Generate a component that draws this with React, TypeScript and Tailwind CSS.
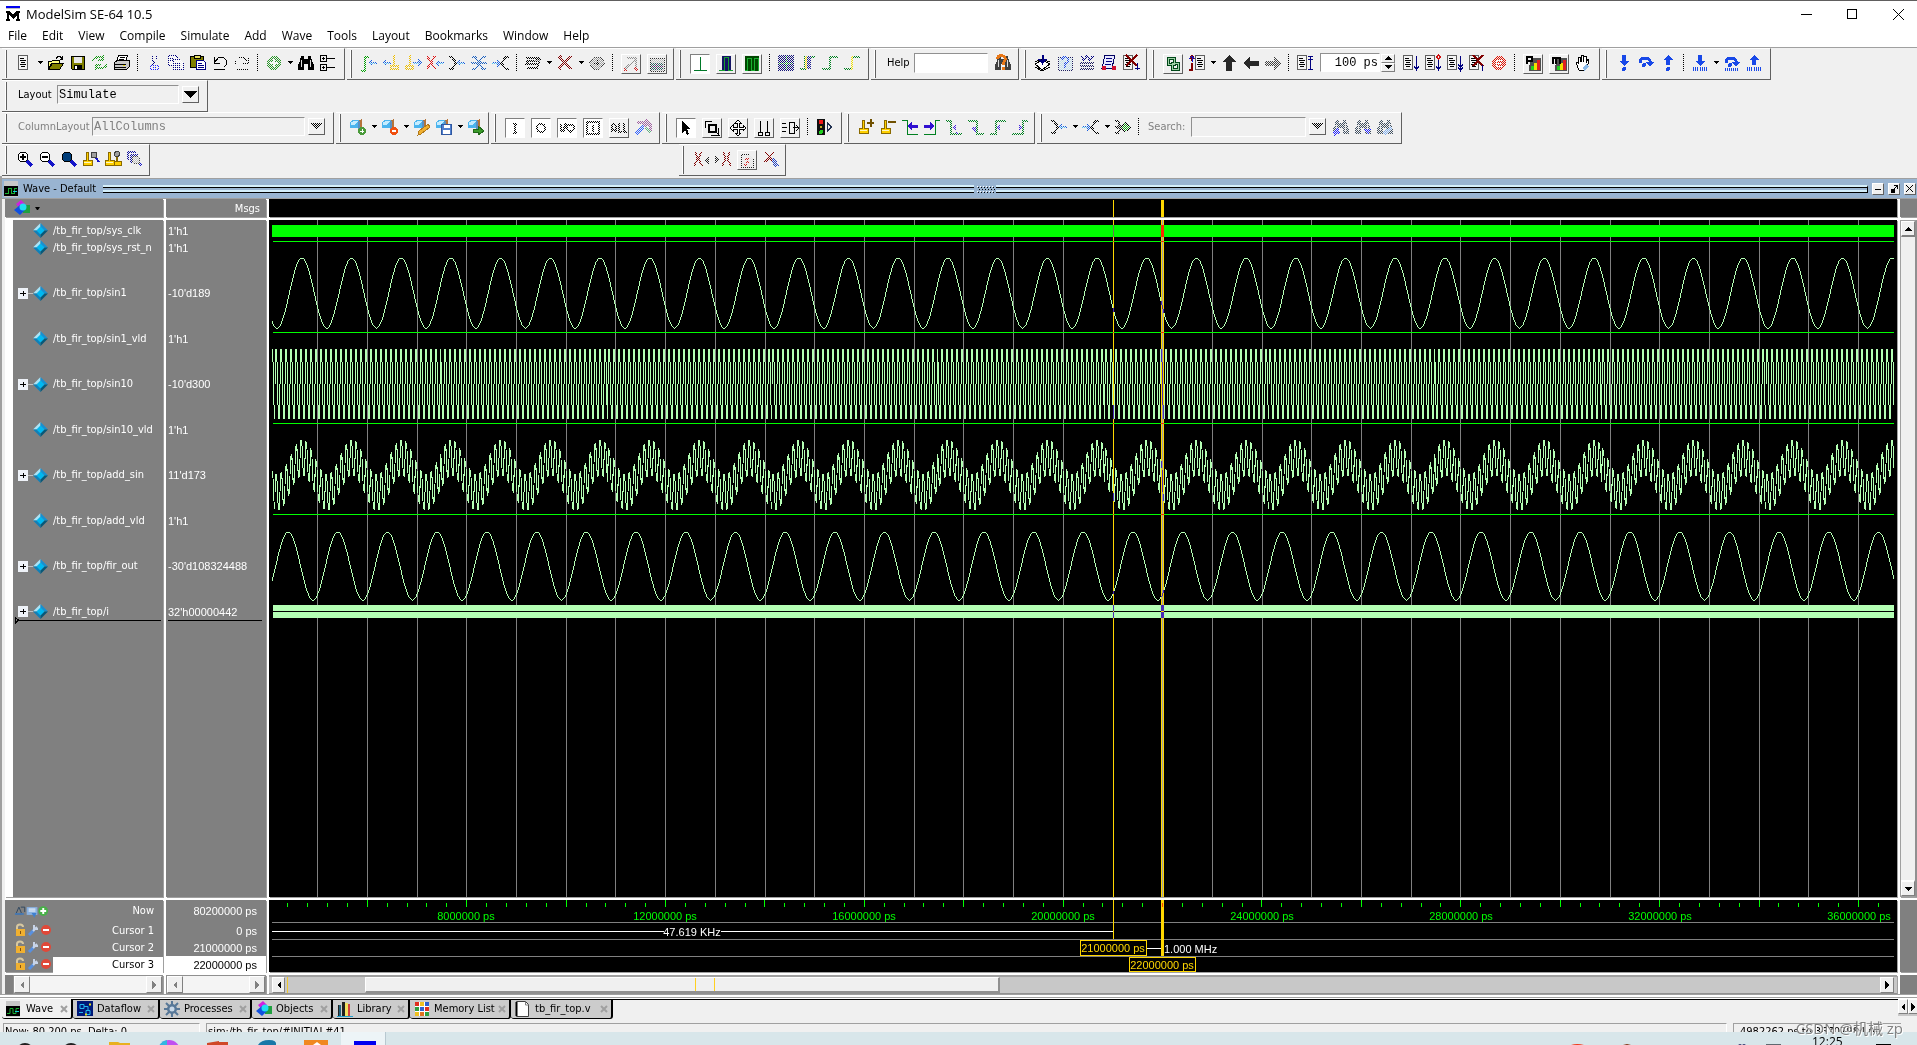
import React from "react";

const s = (d: string, color: string, w = 1) => <path d={d} fill="none" stroke={color} strokeWidth={w} />;
const f = (d: string, color: string, stroke?: string) => <path d={d} fill={color} stroke={stroke} />;

const docLines = (x: number) => (
  <>
    {f(`M${x + 0.5} 1.5h9v14h-9z`, "#f4f4f4", "#606060")}
    {s(`M${x + 2} 4.5h4M${x + 2} 6.5h6M${x + 3} 8.5h4M${x + 2} 10.5h6M${x + 3} 12.5h4`, "#000")}
  </>
);
const folder = (
  <>
    {f("M1 4l3-2h6l-1 8H1z", "#4bb4ee")}
    {f("M2 4l3-1h4l-3 4H2z", "#c4ecff")}
    {f("M10 2l3-1v9l-3 2z", "#b5733a")}
    {f("M9 3h2v8H9z", "#5b8fc0")}
  </>
);
const binoculars = (c: string) => (
  <>
    {f("M4 2h3v3h4V2h3l1 5 2 4v5h-6v-6H7v6H1v-5l2-4z", c)}
    {s("M4.5 6v7M13.5 6v7", "#ddd")}
  </>
);
const leftArrow = (x: number, c = "#1a5fe0") => (
  <>
    {f(`M${x} 9l4-4v3h5v2h-5v3z`, c)}
    {s(`M${x + 2} 9.5h6`, "#4fc3f7")}
  </>
);
const rightArrow = (x: number, c = "#1a5fe0") => (
  <>
    {f(`M${x + 9} 9l-4-4v3h-5v2h5v3z`, c)}
    {s(`M${x} 9.5h6`, "#4fc3f7")}
  </>
);
const magnifier = (c: string) => (
  <>
    {s("M11 11l5 5", "#1414c8", 3)}
    <circle cx="7" cy="7" r="5" fill={c} stroke="#000" />
  </>
);
const cursorPin = (x: number) => (
  <>
    {f(`M${x + 3} 2h2v8h4v5H${x}v-5h3z`, "#ffd000", "#8a6a00")}
    {s(`M${x + 1} 12.5h7`, "#fff8c0")}
  </>
);
const blueDown = f("M7 1h4v6h3l-5 5-5-5h3z", "#1848e8");
const blueUp = f("M9 1l5 5h-3v5H7V6H4z", "#1848e8");
const stepOver = (
  <>
    {s("M3 9q0-5 5-5t6 6", "#1848e8", 3)}
    {f("M9 8h8l-4 5z", "#1848e8")}
    <circle cx="7" cy="11" r="2" fill="#1848e8" />
  </>
);

const ICONS: Record<string, React.ReactNode> = {
  "New": docLines(3),
  "Open": (
    <>
      {f("M1 7h4l1-1h6v3H5l-4 6z", "#ffff80", "#000")}
      {f("M1.5 15.5l4-6h11l-4 6z", "#808000", "#000")}
      {s("M9 4.5q3-4 6 0M15.500 2v3h-3", "#000")}
    </>
  ),
  "Save": (
    <>
      {f("M2.500 2.500h13v13h-12l-1-1z", "#808000", "#000")}
      {f("M5 3h8v6H5z", "#e8e8e8")}
      {f("M5 11h8v4H5z", "#000")}
      {f("M6 12h2v3H6z", "#fff")}
    </>
  ),
  "Refresh": <>{s("M2 7q3-6 10-3M12 1v5H7", "#149614", 2)}{s("M16 10q-3 6-10 4M5 16v-5h5", "#149614", 2)}</>,
  "Print": (
    <>
      {f("M5.500 1.500h9l-2 6h-9z", "#fff", "#000")}
      {s("M7 3.500h5M6 5.500h5", "#000")}
      {f("M1.500 8.500l3-2h12v6l-3 3h-12z", "#c8c8c8", "#000")}
      {s("M2 10.500h11M2 13.500h11", "#000")}
      {f("M10 11h2v1h-2z", "#e8d800")}
    </>
  ),
  "Cut": <>{s("M7 1v5l4 5M11 1v5l-4 5", "#000080")}{s("M5.500 11.500h3v4h-3zM10.500 11.500h3v4h-3z", "#2222ff")}</>,
  "Copy": (
    <>
      {f("M1.500 1.500h7l2 2v8h-9z", "#fff", "#000080")}
      {f("M6.500 5.500h7l3 3v7h-10z", "#fff", "#000080")}
      {s("M3 4.500h4M3 6.500h3M8 9.500h5M8 11.500h6M8 13.500h6", "#000080")}
    </>
  ),
  "Paste": (
    <>
      {f("M1.500 2.500h13v11h-13z", "#808000", "#000")}
      {f("M5 1h6v3H5z", "#e8e060", "#000")}
      {f("M7.500 6.500h7l2 2v7h-9z", "#fff", "#000080")}
      {s("M9 9.500h4M9 11.500h6M9 13.500h6", "#000080")}
    </>
  ),
  "Undo": <>{s("M3 3v6h6M3.500 8.500l4-5h5l3 3v4l-3 3", "#000")}{s("M3 15.500h11", "#000")}</>,
  "Redo": <>{s("M15 3v6H9M14.500 8.500l-4-5h-5l-3 3v4l3 3", "#000")}{s("M4 15.500h11", "#000")}</>,
  "Add item": <><circle cx="9" cy="9" r="7" fill="#2a962a" />{s("M9 5v8M5 9h8", "#fff", 2)}</>,
  "Find": binoculars("#000"),
  "Expand tree": (
    <>
      {s("M1.500 1.500h6v6h-6zM1.500 10.500h6v6h-6zM3 4.500h3M4.500 3v3M3 13.500h3M4.500 12v3", "#000")}
      {s("M8 4.500h8M8 13.500h8", "#000")}
    </>
  ),
  "Insert cursor": <>{s("M1 16.500h4v-14h4", "#00a000", 2)}{leftArrow(8)}</>,
  "Previous cursor": <>{leftArrow(0)}{s("M12 1v11M9 12h7v3H9z", "#f0c000", 2)}</>,
  "Next cursor": <>{s("M6 1v11M2 12h7v3H2z", "#f0c000", 2)}{rightArrow(9)}</>,
  "Delete cursor": <>{s("M1 2l8 13M9 2L1 15", "#e01010", 2)}{leftArrow(9)}</>,
  "Expand time": <>{s("M1 3h3l4 6-4 6H1", "#000", 2)}{leftArrow(8)}</>,
  "Expand all time": <>{s("M2 3h3l4 5 4-5h3M2 15h3l4-5 4 5h3M1 9h16", "#1a5fc0", 2)}</>,
  "Collapse time": <>{rightArrow(0)}{s("M17 3h-3L9 9l5 6h3", "#000", 2)}</>,
  "Stack": <>{s("M2 4h12l-2 3H4l-2 3h12M3 14h10l3-10", "#000", 2)}{s("M8 9l3-3h5", "#808080")}</>,
  "Remove": s("M3 2l12 13M15 2L3 15", "#800000", 3),
  "Hex": <>{f("M1 9l5-6h6l5 6-5 6H6z", "#a0a0a0", "#404040")}{s("M9 5v7M6 9h6", "#000")}</>,
  "Edit mode": <>{s("M2 15l12-11M5 3h9v9", "#909090", 2)}{s("M2 14l3 2M13 13l3 3", "#d02020", 2)}</>,
  "Calc": <>{f("M2 3h14v13H2z", "#c0c0c0", "#303030")}{f("M3 8h12v7H3z", "#306060")}{s("M3 11.500h12M8.500 8v7", "#702070")}</>,
  "Event": s("M9.500 2v14M3 15.500h13", "#007828"),
  "Cycle": <>{f("M5 1h9v15H5z", "#141464")}{s("M2 15.500h5v-13h4v13h5", "#18a030")}</>,
  "Delta": <>{f("M2 1h14v15H2z", "#004800")}{s("M2 15.500h2v-12h4v12h3v-12h4v12h1", "#18b030")}</>,
  "Zoom pattern": <>{f("M1 1h16v16H1z", "#141478")}{s("M2 9h14M9.500 2v14", "#18a030")}</>,
  "Edge 1": <>{s("M1 15h5V3h10", "#008020", 2)}{f("M8 2h4v13H8z", "#202090")}{s("M7 2v13", "#f0e000", 2)}</>,
  "Edge 2": s("M1 15h8V3h8", "#008020", 2),
  "Edge 3": <>{s("M1 15h7M10 3h7", "#008020", 2)}{s("M9 2v14", "#f0e000", 2)}</>,
  "Help search": <>{binoculars("#404040")}{s("M3 5q2-5 6-3t1 6l-1 3", "#e87818", 3)}{f("M8 13h3v3H8z", "#e87818")}</>,
  "Compile": <>{f("M1 10l7-4 8 4-8 6z", "#fff", "#000")}{s("M1 8l7-3 8 3M1 13l7 4 8-4", "#000")}{s("M8.500 1v7M5 5l3.500 4L12 5", "#000080", 2)}</>,
  "Compile selected": <>{f("M2 3h14v13H2z", "#c4e0ee", "#202060")}{s("M6 6q0-3 3-3t3 3-3 4v4", "#1848e8", 2)}</>,
  "Compile all": <>{s("M2 8.500h14M2 11.500h14M2 14.500h14", "#202060", 2)}{s("M3 2l3 4 3-4 3 4 3-4", "#000080", 2)}</>,
  "Simulate run": <>{f("M5 1h10l-3 13H2z", "#e8e8ff", "#000060")}{s("M6 4h6M6 7h6M5 10h6", "#000080")}<circle cx="4" cy="14" r="2.500" fill="#d01030" /><circle cx="14" cy="14" r="2.500" fill="#d01030" /></>,
  "Break run": <>{docLines(1)}{s("M4 1l11 11M15 1L4 12", "#800000", 2)}{s("M15.500 9v7M13 14h5", "#000080")}</>,
  "Restart links": (
    <>
      {s("M4.500 3.500h6v6h-6zM8.500 8.500h6v6h-6z", "#004818", 3)}
      {s("M4.500 3.500h6v6h-6zM8.500 8.500h6v6h-6z", "#a0d0a8")}
    </>
  ),
  "Source": <>{s("M1 16h3V9M4 7V2M2 5l2-3 2 3", "#800000", 2)}{s("M4 2v6M1 5l3-3 3 3", "#1414c8")}{docLines(7)}</>,
  "Up": f("M9 1l7 7h-4v9H6V8H2z", "#282828"),
  "Back": f("M1 9l7-6v4h9v5H8v4z", "#282828"),
  "Forward": f("M17 9l-7-6v4H1v5h9v4z", "#404040"),
  "Restart": <>{docLines(1)}{s("M14.500 2v14M12 5h5M12 2.500h5M12 15.500h5", "#000080", 1)}</>,
  "Run": <>{docLines(1)}{s("M14.500 2v14M12 12l2.500 4 2.500-4", "#000080")}</>,
  "Continue run": <>{docLines(1)}{s("M14.500 6v10M12 12l2.500 4 2.500-4", "#000080")}{s("M14.500 1l2 2-2 2-2-2z", "#d01010")}</>,
  "Run all": <>{docLines(1)}{s("M14.500 2v14", "#000080")}{s("M12 10l2.500 4 2.500-4M12 13l2.500 4 2.500-4", "#000080")}</>,
  "Break": <>{docLines(1)}{s("M5 1l10 11M15 1L5 12", "#800000", 2)}{s("M14.500 11v6", "#000080")}</>,
  "Stop": <><circle cx="9" cy="9" r="7" fill="#e01000" />{s("M13 6H6v6h7M6 9h6", "#fff", 1)}</>,
  "Profile": <>{f("M8 3h9v13H5v-4z", "#505050")}{f("M7 11h3v4H7z", "#20d020")}{f("M10 8h3v7h-3z", "#f0e000")}{f("M13 5h3v10h-3z", "#e02020")}{s("M2.500 9V2h5v4h-5", "#000", 2)}</>,
  "Memory profile": <>{f("M8 3h9v13H5v-4z", "#505050")}{f("M7 11h3v4H7z", "#20d020")}{f("M10 8h3v7h-3z", "#f0e000")}{f("M13 5h3v10h-3z", "#e02020")}{s("M2.500 9V3h7v6M6 3v6", "#000", 2)}</>,
  "Hand": <>{f("M5 16L2 9l2-1 1 2-1-7h2l1 5V1h2v7l1-6h2v7l2-4 1 1-2 8-2 2z", "#fff", "#000")}{f("M9 13l4-3 2 3-5 4z", "#88b8e8")}</>,
  "Step into": <>{blueDown}<circle cx="9" cy="15" r="2" fill="#1848e8" /></>,
  "Step over": stepOver,
  "Step out": <>{blueUp}<circle cx="9" cy="15" r="2" fill="#1848e8" /></>,
  "Step into current": <>{blueDown}{s("M2.500 13v4M4.500 13v4M6.500 13v4M9 13v4M11.500 13v4M13.500 13v4M15.500 13v4", "#1848e8")}</>,
  "Step over current": <>{stepOver}{s("M2.500 14v3M4.500 14v3M6.500 14v3M8.500 14v3M10.500 14v3M12.500 14v3M14.500 14v3", "#1848e8")}</>,
  "Step out current": <>{blueUp}{s("M2.500 13v4M4.500 13v4M6.500 13v4M9 13v4M11.500 13v4M13.500 13v4M15.500 13v4", "#1848e8")}</>,
  "Add folder": <>{folder}<circle cx="13" cy="13" r="4" fill="#4a9a3a" />{s("M13 11v4M11 13h4", "#fff")}</>,
  "Delete folder": <>{folder}<circle cx="13" cy="13" r="4" fill="#f05010" />{s("M11 13h4", "#fff", 2)}</>,
  "Edit folder": <>{folder}{f("M5 17l1-4 9-7 2 3-9 7z", "#f0b030", "#b07818")}</>,
  "Save folder": <>{folder}{f("M6.500 6.500h10v10h-10z", "#5080d0", "#3058a0")}{f("M9 7h6v3H9zM8 12h7v4H8z", "#fff")}</>,
  "Load folder": <>{folder}{f("M6 11h5V8l6 5-6 4v-3H6z", "#3a9a2a", "#206818")}</>,
  "Inputs": s("M7 4.500h4M9 4v9M7 13.500h4", "#000", 2),
  "Outputs": <circle cx="9" cy="9" r="4" fill="none" stroke="#000" strokeWidth="2" />,
  "Inouts": <>{s("M2.500 5v8M8 4L5 13", "#000", 2)}<circle cx="12.500" cy="9" r="3.500" fill="none" stroke="#000" strokeWidth="2" /></>,
  "Internals": <>{s("M3 3h12v12H3zM8 6.500h1v6", "#000", 2)}</>,
  "All signals": s("M1.500 13V7l2-2 2 2v6M1 10.500h4M8.500 4v8.500h3M13.500 4v8.500h3", "#000", 2),
  "Filter tools": <>{s("M2 16L10 7", "#3060ff", 4)}{s("M3 4h5l5 4M11 2l5 5v6", "#a060a0", 3)}{s("M12 9l4 6", "#60b080", 3)}</>,
  "Select": f("M5 2v12l3-3 2 5 2-1-2-5h4z", "#000"),
  "Zoom box": <>{s("M2 9V2h7M8 16h7V9", "#000")}{s("M6 6h7v7H6z", "#000", 2)}{s("M13 13l4 4", "#000", 1)}</>,
  "Pan": f("M9 1l3 3h-2v4h4V6l3 3-3 3v-2h-4v4h2l-3 3-3-3h2v-4H4v2L1 9l3-3v2h4V4H6z", "#fff", "#000"),
  "Two cursors": s("M5.500 2v11M12.500 2v11M3.500 13.500h4v3h-4zM10.500 13.500h4v3h-4z", "#000"),
  "Edit wave": <>{s("M1 4.500h4M1 8.500h5M1 12.500h4M8.500 3v12M8.500 3.500h5v11h-5M12 8.500h5M15 6l3 3-3 3", "#000")}</>,
  "Stop drawing": <>{f("M2 1h8v16H2z", "#101010")}<circle cx="6" cy="4" r="2.500" fill="#f01818" /><circle cx="6" cy="9" r="1.500" fill="#c8b020" /><circle cx="6" cy="14" r="2" fill="#20d020" />{s("M12.500 5l4 4-4 4z", "#203050")}</>,
  "Add cursor": <>{cursorPin(2)}{s("M10 5h7M13.500 1v8", "#705000", 2)}</>,
  "Delete cursor pin": <>{cursorPin(2)}{s("M9 4h8", "#705000", 2)}</>,
  "Previous transition": <>{s("M1 2.500h5v14h11", "#008020")}{f("M6 8l5-4v3h6v3h-6v3z", "#3010d0")}</>,
  "Next transition": <>{s("M1 16.500h11v-14h5", "#008020")}{f("M11 8L7 4v3H1v3h6v3z", "#3010d0")}</>,
  "Previous falling": <>{s("M1 3h5v13h11", "#008020", 2)}{f("M7 9l4-3v7zM11 14l4 2h-4z", "#4020e0")}</>,
  "Next falling": <>{s("M1 3h9v13h7", "#008020", 2)}{f("M4 11l5-3v6z", "#4020e0")}</>,
  "Previous rising": <>{s("M1 16h6V3h10", "#008020", 2)}{f("M7 10l4-4v8z", "#4020e0")}</>,
  "Next rising": <>{s("M1 16h11V3h5", "#008020", 2)}{f("M12 9L8 6v7z", "#4020e0")}</>,
  "Expand both": <>{s("M1 3h3l3 6-3 6H1M1 9h2", "#000", 2)}{f("M3 7h6v4H3z", "#202020")}{f("M11 4l6 5-6 5-4-5z", "#18a018", "#000")}</>,
  "Search down": <>{binoculars("#405060")}{f("M1 13l5-3 2 5-6 3z", "#2020ff")}</>,
  "Search up": <>{binoculars("#405060")}{f("M10 11h7l-3 6z", "#2020ff")}</>,
  "Search options": <>{binoculars("#405060")}{f("M7 14l8-6 2 3-8 6z", "#80b0f0")}</>,
  "Zoom in": <>{magnifier("#fff")}{s("M7 4v6M4 7h6", "#000", 2)}</>,
  "Zoom out": <>{magnifier("#fff")}{s("M4 7h6", "#000", 2)}</>,
  "Zoom full": magnifier("#003c78"),
  "Zoom cursor": <>{cursorPin(1)}<circle cx="12" cy="5" r="3" fill="#a0a0a0" stroke="#404040" />{s("M14 8l3 4", "#1414c8", 2)}</>,
  "Zoom between": <>{cursorPin(1)}{f("M12 5h1v6h4v4h-7v-4h2z", "#ffd000", "#8a6a00")}<circle cx="13" cy="4" r="2.500" fill="#a0a0a0" stroke="#404040" /></>,
  "Zoom range": <>{s("M1 2h9M2 1v9M4 5h8M5 4v9", "#1010a0", 2)}{s("M12 12l4 4", "#1414c8", 2)}<circle cx="10" cy="10" r="4" fill="#c0c0c0" stroke="#404040" /></>,
  "Previous difference": <>{s("M3 2l2 5v3l-3 6M9 2L7 7v3l3 6", "#800000", 2)}{f("M17 5v9l-5-4z", "#202020")}</>,
  "Next difference": <>{f("M1 5v9l5-4z", "#202020")}{s("M9 2l2 5v3l-3 6M16 2l-2 5v3l3 6", "#800000", 2)}</>,
  "Annotate": <>{f("M3 3h8l4 4v9H3z", "#e8e8e8", "#202020")}{s("M7 8h4M8 11h3M6 14h3", "#d02020", 2)}</>,
  "Clear differences": <>{s("M3 2l9 10M12 2L3 12", "#800000", 2)}{f("M9 9l4-1 4 8-5 1z", "#2040c0")}</>,
};

type Item =
  | { t: "i" | "d" | "b" | "p" | "bd" | "pd"; n: string }
  | { t: "caret" | "sep"; n?: string };

const I = (n: string): Item => ({ t: "i", n });
const D = (n: string): Item => ({ t: "d", n });
const B = (n: string): Item => ({ t: "b", n });
const BD = (n: string): Item => ({ t: "bd", n });
const P = (n: string): Item => ({ t: "p", n });
const PD = (n: string): Item => ({ t: "pd", n });
const C: Item = { t: "caret" };
const S: Item = { t: "sep" };

const DITHER =
  "[mask-image:conic-gradient(#000_25%,transparent_0_50%,#000_0_75%,transparent_0)] [mask-size:2px_2px]";

function Glyph({ name, dim }: { name: string; dim?: boolean }) {
  return (
    <svg width="18" height="18" viewBox="0 0 18 18" shapeRendering="crispEdges" aria-hidden="true" className={dim ? DITHER : ""}>
      {ICONS[name]}
    </svg>
  );
}

function Tools({ items }: { items: Item[] }) {
  return (
    <>
      {items.map((it, i) => {
        if (it.t === "caret")
          return (
            <button key={i} aria-label="More" className="flex w-[10px] shrink-0 items-center justify-center">
              <svg width="5" height="3" shapeRendering="crispEdges"><path d="M0 0h5L3 3H2z" fill="#000" /></svg>
            </button>
          );
        if (it.t === "sep")
          return <span key={i} className="mx-1 h-[18px] w-[2px] shrink-0 bg-[repeating-linear-gradient(#000_0_1px,transparent_1px_2px)] bg-[length:1px_2px] [background-repeat:repeat-y]" />;
        if (it.t === "i" || it.t === "d")
          return (
            <button key={i} aria-label={it.n} className="flex h-5 w-[22px] shrink-0 items-center justify-center">
              <Glyph name={it.n} dim={it.t === "d"} />
            </button>
          );
        const pressed = it.t === "p" || it.t === "pd";
        return (
          <button
            key={i}
            aria-label={it.n}
            className={
              "mx-[3px] mt-[2px] flex size-5 shrink-0 items-center justify-center border " +
              (pressed ? "border-t-[#808080] border-l-[#808080] border-r-white border-b-white bg-white" : "border-t-white border-l-white border-r-[#606060] border-b-[#606060]")
            }
          >
            <Glyph name={it.n} dim={it.t === "bd" || it.t === "pd"} />
          </button>
        );
      })}
    </>
  );
}

function Bar({ className, children }: { className: string; children: React.ReactNode }) {
  return (
    <div className={"mr-[2px] flex h-8 shrink-0 items-center border-t border-r border-b border-t-white border-r-[#606060] border-b-[#606060] pb-[3px] " + className}>
      <span className="mt-[2px] mr-[6px] ml-[3px] h-7 w-[2px] shrink-0 border-r border-l border-r-[#606060] border-l-white" />
      {children}
    </div>
  );
}

function DropArrow({ dim }: { dim?: boolean }) {
  return (
    <span className="pointer-events-none ml-[3px] flex h-[17px] w-[17px] shrink-0 items-center justify-center border border-t-white border-r-[#606060] border-b-[#606060] border-l-white">
      <svg width="13" height="7" shapeRendering="crispEdges" className={dim ? DITHER : ""}><path d="M0 0h13L7 7H6z" fill="#000" /></svg>
    </span>
  );
}

const SUNK = "border border-t-[#909090] border-l-[#909090] border-r-white border-b-white";

const MENUS = ["File", "Edit", "View", "Compile", "Simulate", "Add", "Wave", "Tools", "Layout", "Bookmarks", "Window", "Help"];

const SIGNALS: { name: string; value: string; tall?: boolean; plus?: boolean }[] = [
  { name: "/tb_fir_top/sys_clk", value: "1'h1" },
  { name: "/tb_fir_top/sys_rst_n", value: "1'h1" },
  { name: "/tb_fir_top/sin1", value: "-10'd189", tall: true, plus: true },
  { name: "/tb_fir_top/sin1_vld", value: "1'h1" },
  { name: "/tb_fir_top/sin10", value: "-10'd300", tall: true, plus: true },
  { name: "/tb_fir_top/sin10_vld", value: "1'h1" },
  { name: "/tb_fir_top/add_sin", value: "11'd173", tall: true, plus: true },
  { name: "/tb_fir_top/add_vld", value: "1'h1" },
  { name: "/tb_fir_top/fir_out", value: "-30'd108324488", tall: true, plus: true },
  { name: "/tb_fir_top/i", value: "32'h00000442", plus: true },
];

const X0 = 3;
const X1 = 1625;
const PERIOD = 49.7;

function sinePath(minX: number, cy: number, amp: number) {
  const y = (x: number) => Math.round(cy + amp * Math.cos((2 * Math.PI * (x - minX)) / PERIOD));
  let d = "";
  for (let x = X0; x < X1; x++) {
    const a = y(x);
    const b = y(x + 1);
    const top = Math.min(a, b);
    const bottom = Math.max(a, b, top + 1);
    d += `M${x} ${top}h1V${bottom}h-1z`;
  }
  return d;
}

const STEPS = [[-1, 0], [-1, -0.63], [-0.63, 0.6], [0.6, 1], [0, 1]];

function fastPath(base: (x: number) => number, amp: number) {
  let d = "";
  for (let x = X0; x < X1; x++) {
    const ph = (x - 6) / (PERIOD / 10);
    const k = Math.floor((ph - Math.floor(ph)) * 5 + 0.001) % 5;
    const c = base(x);
    d += `M${x} ${Math.round(c + STEPS[k][0] * amp)}h1V${Math.round(c + STEPS[k][1] * amp)}h-1z`;
  }
  return d;
}

const SIN1 = sinePath(8, 73, 35);
const SIN10 = fastPath(() => 164, 35);
const ADD = fastPath((x) => 255 + 17.5 * Math.cos((2 * Math.PI * (x - 8)) / PERIOD), 18);
const FIR = sinePath(44, 346, 34);
const GRID = Array.from({ length: 32 }, (_, i) => ({ x: Math.floor(48.75 + i * 49.705), color: i === 17 ? "#5f37a8" : "#808080" })).filter((_, i) => i !== 16);
const TICKS = Array.from({ length: 81 }, (_, k) => ({ x: Math.floor(98.3 + (k - 4) * 19.882), big: (k - 4) % 5 === 0 }));
const TIMES = [8, 12, 16, 20, 24, 28, 32, 36];

function WaveBody() {
  return (
    <svg className="block h-full w-full bg-black" shapeRendering="crispEdges" role="img" aria-label="Waveforms">
      {GRID.map(({ x, color }) => <rect key={x} x={x} y="0" width="1" height="100%" fill={color} />)}
      <rect x={X0} y="5" width={X1 - X0} height="12" fill="#00ff00" />
      {[21, 112, 203, 294].map((y) => <rect key={y} x={X0 + 1} y={y} width={X1 - X0 - 1} height="1" fill="#00ff00" />)}
      <path d={SIN1} fill="#b4ffb4" />
      <path d={SIN10} fill="#b4ffb4" />
      <path d={ADD} fill="#b4ffb4" />
      <path d={FIR} fill="#b4ffb4" />
      <rect x={X0 + 1} y="385" width={X1 - X0 - 1} height="6" fill="#b4ffb4" />
      <rect x={X0 + 1} y="391" width={X1 - X0 - 1} height="1" fill="#000" />
      <rect x={X0 + 1} y="392" width={X1 - X0 - 1} height="6" fill="#b4ffb4" />
      <rect x="844" y="0" width="1" height="100%" fill="#ffd700" className="mix-blend-difference" />
      <rect x="844" y="5" width="1" height="12" fill="#6c7a50" />
      <rect x="892" y="0" width="3" height="100%" fill="#ffd700" className="mix-blend-difference" />
    </svg>
  );
}

function Timeline() {
  return (
    <svg className="block h-full w-full bg-black font-['Liberation_Sans',sans-serif] text-[11px]" shapeRendering="crispEdges">
      {TICKS.map(({ x, big }) => <rect key={x} x={x} y={big ? 0 : 3} width="1" height={big ? 7 : 4} fill="#00ff00" />)}
      {TIMES.map((t, i) => (
        <text key={t} x={197 + i * 199} y="20" textAnchor="middle" fill="#00ff00">{t}000000 ps</text>
      ))}
      {[22, 39, 56].map((y) => <rect key={y} x={X0} y={y} width={X1 - X0} height="1" fill="#808080" />)}
      <rect x={X0} y="31" width={844 - X0} height="1" fill="#fff" />
      <rect x="395" y="25" width="57" height="13" fill="#000" />
      <text x="423" y="36" textAnchor="middle" fill="#fff">47.619 KHz</text>
      <rect x="844" y="0" width="1" height="39" fill="#ffd700" />
      <rect x="892" y="0" width="3" height="56" fill="#ffd700" />
      <rect x="893" y="3" width="1" height="4" fill="#ff4000" />
      <rect x="811.5" y="40.5" width="66" height="15" fill="#000" stroke="#ffd700" />
      <text x="844" y="52" textAnchor="middle" fill="#ffd700">21000000 ps</text>
      <rect x="878" y="48" width="14" height="1" fill="#fff" />
      <text x="895" y="53" fill="#fff">1.000 MHz</text>
      <rect x="860.5" y="57.5" width="66" height="14" fill="#000" stroke="#ffd700" />
      <text x="893" y="69" textAnchor="middle" fill="#ffd700">22000000 ps</text>
    </svg>
  );
}

function Diamond() {
  return (
    <svg width="15" height="15" viewBox="0 0 15 15" aria-hidden="true">
      <path d="M7.5 0L0 7.500h4l3.500-3.500z" fill="#a8e4f8" />
      <path d="M7.5 0L15 7.500h-4L7.500 4z" fill="#1890d0" />
      <path d="M0 7.500L7.500 15v-4L4 7.500z" fill="#1080b8" />
      <path d="M15 7.500L7.500 15v-4L11 7.500z" fill="#085878" />
      <path d="M7.500 3.500l4 4-4 4-4-4z" fill="#00b8f0" />
    </svg>
  );
}

function CursorIcons({ first }: { first?: boolean }) {
  return (
    <svg width="40" height="15" viewBox="0 0 40 15" aria-hidden="true">
      {first ? (
        <>
          <path d="M2 10l3-7 3 7zM7 3h4v5" fill="none" stroke="#304860" />
          <rect x="1" y="9" width="9" height="2" fill="#4878b0" />
          <rect x="13" y="3" width="11" height="8" fill="#88b0e0" />
          <path d="M15 5h7M15 7h7" stroke="#fff" />
          <path d="M18 9h5l-2 5z" fill="#4080d0" />
          <circle cx="30" cy="7" r="5" fill="#48b048" />
          <path d="M30 4v6M27 7h6" stroke="#fff" strokeWidth="2" />
        </>
      ) : (
        <>
          <path d="M5 7V4q0-2.500 3-2.500t3 2.500" fill="none" stroke="#d8c8a0" strokeWidth="2" />
          <rect x="4" y="6" width="9" height="7" fill="#f0b030" />
          <rect x="8" y="8" width="1" height="3" fill="#805010" />
          <path d="M17 12l5-5" stroke="#5890e0" strokeWidth="3" />
          <path d="M21 8l4-4M22 2v4h4" stroke="#c8d4e8" strokeWidth="2" fill="none" />
          <circle cx="34" cy="7" r="5" fill="#e04838" />
          <rect x="31" y="6" width="6" height="2" fill="#fff" />
        </>
      )}
    </svg>
  );
}

function ScrollButton({ dir, dim, className }: { dir: "l" | "r" | "u" | "d"; dim?: boolean; className: string }) {
  const d = { l: "M6 0v8L2 4z", r: "M2 0v8l4-4z", u: "M0 6h8L4 2z", d: "M0 2h8L4 6z" }[dir];
  return (
    <button aria-label="Scroll" className={"flex shrink-0 items-center justify-center border border-t-white border-r-[#808080] border-b-[#808080] border-l-white bg-[#f0f0f0] " + className}>
      <svg width="8" height="8" shapeRendering="crispEdges"><path d={d} fill={dim ? "#808080" : "#000"} /></svg>
    </button>
  );
}

function SmallScroll() {
  return (
    <div className="flex h-full border border-[#909090] bg-[#f4f4f4]">
      <ScrollButton dir="l" dim className="w-4" />
      <div className="flex-1" />
      <ScrollButton dir="r" dim className="w-4" />
    </div>
  );
}

const CELL = "min-h-0 min-w-0 shadow-[1px_1px_0_#a0a0a0]";

const tabIcon: Record<string, React.ReactNode> = {
  Wave: <>{f("M0 0h14v16H0z", "#c8c8c8")}{f("M0 5h14v10H0z", "#000")}{s("M1 12.500h3v-5h3v5h3v-5h3", "#18b030")}{s("M9 10.500h4", "#10d0e0")}</>,
  Dataflow: <>{f("M0 0h16v15H0z", "#001878")}{s("M3 3.500h4v4H3zM9 9.500h4v4H9zM7 5.500h4v4M2 11.500h4", "#20b8f0")}{s("M8 13.500h2M12 3.500h2", "#e0e020", 2)}</>,
  Processes: <><circle cx="8" cy="8" r="5" fill="#587898" /><path d="M8 0v16M0 8h16M2 2l12 12M14 2L2 14" stroke="#587898" strokeWidth="2" /><circle cx="8" cy="8" r="2.500" fill="#c8d8e8" /></>,
  Objects: <>{f("M2 4l5-4 4 4-5 5z", "#d020e0")}{f("M9 5h7v8H9z", "#20a040")}{f("M0 10l6-5 5 5-5 5z", "#1050e0")}<circle cx="9" cy="7" r="3.500" fill="#20e0f0" /></>,
  Library: <>{f("M1 4h3v11H1zM5 1h3v14H5z", "#202020")}{f("M8 2h3v13H8z", "#f0e060")}{f("M11 3h2v12h-2z", "#d04040")}{s("M0 15.500h16M3 4v11", "#20a0d0")}</>,
  "Memory List": <>{f("M1 1h14v14H1z", "#fff")}{f("M1 1h4v4H1zM11 6h4v4h-4z", "#e03020")}{f("M6 1h4v4H6zM1 11h4v4H1z", "#f0c020")}{f("M11 1h4v4h-4zM6 6h4v4H6z", "#3060d0")}{f("M1 6h4v4H1zM11 11h4v4h-4z", "#30a040")}{f("M6 11h4v4H6z", "#e07020")}</>,
  "tb_fir_top.v": <>{f("M1.500.500h9l3 3v12h-12z", "#fff", "#404040")}{s("M10.500 1v3h3", "#808080")}{s("M1.500 1v14", "#000", 2)}</>,
};

const TABS: [string, string][] = [
  ["Wave", "w-[71px]"],
  ["Dataflow", "w-[87px]"],
  ["Processes", "w-[92px]"],
  ["Objects", "w-[81px]"],
  ["Library", "w-[77px]"],
  ["Memory List", "w-[101px]"],
  ["tb_fir_top.v", "w-[102px]"],
];

export default function App() {
  return (
    <div className="flex h-screen w-full flex-col overflow-hidden border-t border-t-[#605e5e] bg-[#f0f0f0] font-['DejaVu_Sans_Condensed','DejaVu_Sans',sans-serif] text-[11px] leading-4 whitespace-nowrap text-black">
      <header className="flex h-[26px] shrink-0 items-center bg-white pl-[5px] font-['Open_Sans',sans-serif] text-[13px]">
        <svg width="16" height="16" viewBox="0 0 16 16" shapeRendering="crispEdges" aria-hidden="true">
          <rect x="1" width="14" height="2" fill="#0000f0" />
          <rect x="1" y="2" width="14" height="1" fill="#c0c0c0" />
          <path d="M1 5h4l3 4 3-4h4v2h-1v6h1v2h-4v-2h1V9l-4 4-4-4v4h1v2H1v-2h1V7H1z" fill="#000" />
        </svg>
        <h1 className="ml-[5px] flex-1">ModelSim SE-64 10.5</h1>
        <div className="flex gap-[34px] pr-3">
          <button aria-label="Minimize" className="flex w-3 items-center"><svg width="11" height="11" shapeRendering="crispEdges"><path d="M0 5.500h11" stroke="#000" /></svg></button>
          <button aria-label="Maximize" className="flex w-3 items-center"><svg width="11" height="11" shapeRendering="crispEdges"><path d="M.5.5h9v9h-9z" fill="none" stroke="#000" /></svg></button>
          <button aria-label="Close" className="flex w-3 items-center"><svg width="11" height="11"><path d="M0 0l11 11M11 0L0 11" stroke="#000" /></svg></button>
        </div>
      </header>
      <nav className="flex h-5 shrink-0 items-center gap-[15px] bg-white pb-[2px] pl-2 font-['Open_Sans',sans-serif] text-xs">
        {MENUS.map((m) => <button key={m}>{m}</button>)}
      </nav>

      <section aria-label="Toolbars" className="shrink-0 border-t border-t-[#a0a0a0] pl-[2px]">
        <div className="flex h-8">
          <Bar className="w-[343px]"><Tools items={[I("New"), C, I("Open"), I("Save"), D("Refresh"), I("Print"), S, D("Cut"), D("Copy"), I("Paste"), I("Undo"), D("Redo"), S, D("Add item"), C, I("Find"), I("Expand tree")]} /></Bar>
          <Bar className="w-[327px]"><Tools items={[D("Insert cursor"), D("Previous cursor"), D("Next cursor"), D("Delete cursor"), D("Expand time"), D("Expand all time"), D("Collapse time"), S, D("Stack"), C, D("Remove"), C, D("Hex"), S, BD("Edit mode"), BD("Calc")]} /></Bar>
          <Bar className="w-[193px]"><Tools items={[P("Event"), B("Cycle"), B("Delta"), S, D("Zoom pattern"), D("Edge 1"), D("Edge 2"), D("Edge 3")]} /></Bar>
          <Bar className="w-[148px]">
            <label htmlFor="help" className="ml-[5px] w-[27px]">Help</label>
            <input id="help" className={"h-5 w-[74px] bg-white " + SUNK} />
            <span className="w-1" />
            <Tools items={[I("Help search")]} />
          </Bar>
          <Bar className="w-[126px]"><Tools items={[I("Compile"), D("Compile selected"), D("Compile all"), I("Simulate run"), I("Break run")]} /></Bar>
          <Bar className="w-[451px]">
            <Tools items={[B("Restart links"), I("Source"), C, I("Up"), I("Back"), D("Forward"), S, I("Restart")]} />
            <input aria-label="Run length" defaultValue="100 ps" className={"ml-1 h-[19px] w-[60px] bg-white pr-px text-right font-['Liberation_Mono',monospace] text-[12px] " + SUNK} />
            <span className="mr-[5px] ml-px flex w-[14px] flex-col">
              <ScrollButton dir="u" className="h-[9px] w-[14px]" />
              <ScrollButton dir="d" className="h-[9px] w-[14px]" />
            </span>
            <Tools items={[I("Run"), I("Continue run"), I("Run all"), I("Break"), D("Stop"), S, B("Profile"), B("Memory profile"), I("Hand")]} />
          </Bar>
          <Bar className="w-[169px]"><Tools items={[I("Step into"), I("Step over"), I("Step out"), S, I("Step into current"), C, I("Step over current"), I("Step out current")]} /></Bar>
        </div>
        <div className="flex h-8">
          <Bar className="w-[206px]">
            <label htmlFor="layout" className="ml-[5px] w-[39px]">Layout</label>
            <select id="layout" className={"h-[19px] w-[122px] appearance-none bg-[#f0f0f0] pl-px font-['Liberation_Mono',monospace] text-[12px] leading-4 " + SUNK}><option>Simulate</option></select>
            <DropArrow />
          </Bar>
        </div>
        <div className="flex h-8">
          <Bar className="w-[332px]">
            <label htmlFor="cols" className="ml-[5px] w-[74px] text-[#808080]">ColumnLayout</label>
            <select id="cols" className={"h-[19px] w-[213px] appearance-none bg-[#f0f0f0] pl-px font-['Liberation_Mono',monospace] text-[12px] leading-4 text-[#808080] " + SUNK}><option>AllColumns</option></select>
            <DropArrow dim />
          </Bar>
          <Bar className="w-[153px]"><Tools items={[I("Add folder"), C, I("Delete folder"), C, I("Edit folder"), I("Save folder"), C, I("Load folder")]} /></Bar>
          <Bar className="w-[169px]"><Tools items={[PD("Inputs"), PD("Outputs"), PD("Inouts"), PD("Internals"), BD("All signals"), D("Filter tools")]} /></Bar>
          <Bar className="w-[180px]"><Tools items={[P("Select"), B("Zoom box"), B("Pan"), B("Two cursors"), B("Edit wave"), S, I("Stop drawing")]} /></Bar>
          <Bar className="w-[191px]"><Tools items={[I("Add cursor"), I("Delete cursor pin"), I("Previous transition"), I("Next transition"), D("Previous falling"), D("Next falling"), D("Previous rising"), D("Next rising")]} /></Bar>
          <Bar className="w-[365px]">
            <Tools items={[D("Expand time"), C, D("Collapse time"), C, D("Expand both"), S]} />
            <label htmlFor="search" className="ml-1 w-[43px] text-[#808080]">Search:</label>
            <input id="search" className={"h-5 w-[115px] bg-[#f0f0f0] " + SUNK} />
            <DropArrow dim />
            <span className="w-1" />
            <Tools items={[D("Search down"), D("Search up"), D("Search options")]} />
          </Bar>
        </div>
        <div className="flex h-8">
          <Bar className="w-[148px]"><span className="w-px" /><Tools items={[I("Zoom in"), I("Zoom out"), I("Zoom full"), I("Zoom cursor"), I("Zoom between"), D("Zoom range")]} /></Bar>
          <span className="w-[527px]" />
          <Bar className="w-[107px]"><Tools items={[D("Previous difference"), D("Next difference"), BD("Annotate"), D("Clear differences")]} /></Bar>
        </div>
      </section>

      <main className="flex min-h-0 flex-1 flex-col border-l-2 border-l-[#a0a0a0]">
        <div className="mt-[2px] flex h-[21px] shrink-0 items-center border-t border-b border-t-[#a0a0a0] border-b-[#a0a0a0] bg-[#99b4d1] pl-[2px]">
          <svg width="15" height="16" shapeRendering="crispEdges" aria-hidden="true">{tabIcon.Wave}</svg>
          <h2 className="ml-1 w-20">Wave - Default</h2>
          <span className="h-2 flex-1 border-t-2 border-b border-t-[#d4eefa] border-b-black bg-[linear-gradient(#000_0_1px,transparent_1px_3px,#d4eefa_3px_5px)]" />
          <svg width="22" height="8" shapeRendering="crispEdges"><path d="M3 1.500h16M3 6.500h16" stroke="#fff" strokeDasharray="1 2" /><path d="M4 2.500h16M5 4.500h16M4 7.500h16" stroke="#000" strokeDasharray="1 2" /></svg>
          <span className="h-2 flex-1 border-t-2 border-r border-b border-t-[#d4eefa] border-r-black border-b-black bg-[linear-gradient(#000_0_1px,transparent_1px_3px,#d4eefa_3px_5px)]" />
          <div className="flex gap-1 pr-px pl-1">
            {[["Minimize pane", "M2 5h7v2H2z"], ["Undock pane", "M2 5h5v5H2zM5 1h5v5H9V3L6 6 5 5l3-3H5z"], ["Close pane", "M2 1l3 3 3-3 1 1-3 3 3 3-1 1-3-3-3 3-1-1 3-3-3-3z"]].map(([n, d]) => (
              <button key={n} aria-label={n} className="size-3 border border-t-white border-r-[#606060] border-b-[#606060] border-l-white bg-[#f0f0f0]">
                <svg width="10" height="10" viewBox="0 0 11 11" shapeRendering="crispEdges"><path d={d} fill="#000" /></svg>
              </button>
            ))}
          </div>
        </div>

        <div className="ml-[3px] grid min-h-0 flex-1 grid-cols-[158px_100px_1fr_17px] grid-rows-[18px_1fr_72px_19px] gap-[3px] overflow-hidden bg-white">
          <div className={CELL + " flex items-center bg-[#808080] pl-[9px]"}>
            <svg width="18" height="16" viewBox="0 0 18 16" aria-hidden="true">{tabIcon.Objects}</svg>
            <button aria-label="Signal menu" className="ml-[3px]"><svg width="5" height="3"><path d="M0 0h5L3 3H2z" fill="#000" /></svg></button>
          </div>
          <div className={CELL + " bg-[#808080] pt-[2px] pr-[6px] text-right text-white"}>Msgs</div>
          <div className={CELL + " bg-black"}>
            <svg className="block h-full w-full" shapeRendering="crispEdges" aria-hidden="true">
              <rect x="844" y="1" width="1" height="18" fill="#ffd700" />
              <rect x="892" y="1" width="3" height="18" fill="#ffd700" />
            </svg>
          </div>
          <div className={CELL + " bg-[#808080]"} />

          <div className={CELL + " overflow-hidden border-l-8 border-l-white bg-[#808080] pt-[2px] text-white"}>
            {SIGNALS.map((g) => (
              <div key={g.name} className={"flex items-center " + (g.tall ? "h-[74px]" : "h-[17px]")}>
                <span className="flex w-[20px] items-center pl-[5px]">
                  {g.plus && (
                    <button aria-label={"Expand " + g.name}>
                      <svg width="15" height="11" shapeRendering="crispEdges" className="block"><path d="M10 5.500h5" stroke="#c0c0c0" /><path d="M0 0h10v11H0z" fill="#eef2f8" /><path d="M2 5.500h6M5 3v5" stroke="#000" /></svg>
                    </button>
                  )}
                </span>
                <Diamond />
                <span className="ml-[5px]">{g.name}</span>
              </div>
            ))}
            <svg width="146" height="7" className="-mt-[3px] ml-[2px] block" shapeRendering="crispEdges" aria-hidden="true"><path d="M.5 1v5l3-3zM3 3.500h143" fill="none" stroke="#000" /></svg>
          </div>
          <div className={CELL + " overflow-hidden bg-[#808080] pt-[2px] pl-[2px] font-['Liberation_Sans',sans-serif] text-white"}>
            {SIGNALS.map((g) => (
              <div key={g.name} className={"flex items-center " + (g.tall ? "h-[74px]" : "h-[17px]")}>{g.value}</div>
            ))}
            <div className="mr-[4px] h-px bg-black" />
          </div>
          <div className={CELL + " overflow-hidden"}><WaveBody /></div>
          <div className={CELL + " flex flex-col border border-r-2 border-t-[#a0a0a0] border-r-[#909090] border-b-[#a0a0a0] border-l-[#a0a0a0] bg-[#f0f0f0]"}>
            <ScrollButton dir="u" className="h-4 border-b-2" />
            <div className="flex-1" />
            <ScrollButton dir="d" className="h-4 border-t-2 border-t-[#909090]" />
          </div>

          <div className={CELL + " bg-[#808080] text-white"}>
            {["Now", "Cursor 1", "Cursor 2", "Cursor 3"].map((c, i) => (
              <div key={c} className={"flex items-center " + (i === 0 ? "h-[22px]" : "h-[17px]")}>
                <span className={"flex w-[48px] " + (i === 0 ? "pl-[9px]" : "pl-[7px]")}><CursorIcons first={i === 0} /></span>
                <span className={"flex-1 pr-[9px] text-right " + (i === 3 ? "bg-white text-black" : "")}>{c}</span>
              </div>
            ))}
          </div>
          <div className={CELL + " bg-[#808080] font-['Liberation_Sans',sans-serif] text-white"}>
            {["80200000 ps", "0 ps", "21000000 ps", "22000000 ps"].map((c, i) => (
              <div key={c} className={"flex items-center justify-end pr-[9px] " + (i === 0 ? "h-[22px]" : "h-[17px]") + (i === 3 ? " bg-white text-black" : "")}>{c}</div>
            ))}
          </div>
          <div className={CELL + " overflow-hidden"}><Timeline /></div>
          <div className={CELL + " bg-[#808080]"} />

          <div className={CELL + " bg-[#808080] pl-2"}><SmallScroll /></div>
          <div className={CELL}><SmallScroll /></div>
          <div className={CELL + " flex border-t-2 border-b border-t-[#a0a0a0] border-b-[#909090] bg-[#c8c8c8] pr-[3px] pl-[3px]"}>
            <ScrollButton dir="l" className="w-[13px]" />
            <div className="w-[2px]" />
            <div className="w-px bg-[#f0c830]" />
            <div className="w-[77px]" />
            <div className="flex w-[635px] border border-r-2 border-b-2 border-t-white border-r-[#909090] border-b-[#909090] border-l-white bg-[#f0f0f0] pl-[329px]">
              <span className="mr-[18px] w-px bg-[#ffd020]" />
              <span className="w-px bg-[#ffd020]" />
            </div>
            <div className="flex-1" />
            <ScrollButton dir="r" className="w-[14px]" />
          </div>
          <div className={CELL + " bg-[#808080]"} />
        </div>
      </main>

      <div className="flex h-[28px] shrink-0 flex-col border-t border-t-[#a0a0a0]">
        <div className="h-[2px] bg-white" />
        <div className="h-px bg-[#a0a0a0]" />
        <div className="h-px bg-white" />
        <div className="flex h-[20px] items-start pl-[2px]">
          {TABS.map(([n, w], i) => (
            <div key={n} className={"flex h-5 shrink-0 items-center rounded-b-[3px] border-r-2 border-b border-r-black border-b-black pl-1 " + w + (i === 0 ? " bg-[#f0f0f0]" : " border-t border-t-black bg-[#cccccc]")}>
              <svg width="16" height="16" viewBox="0 0 16 16" className="shrink-0" aria-hidden="true">{tabIcon[n]}</svg>
              <button className="ml-1 flex-1 text-left">{n}</button>
              <button aria-label={"Close " + n} className="mr-[3px]"><svg width="8" height="8"><path d="M1 1l6 6M7 1L1 7" stroke="#a0a0a0" strokeWidth="2" /></svg></button>
            </div>
          ))}
          <div className="flex-1 border-t border-t-black" />
          <div className="flex h-[17px] w-[19px] overflow-hidden bg-[#c8c8c8]">
            <ScrollButton dir="l" className="h-[15px] w-[10px]" />
            <ScrollButton dir="r" className="h-[15px] w-[10px]" />
          </div>
        </div>
      </div>
      <footer className="relative flex h-[10px] shrink-0 gap-[6px] pt-px pr-4 pl-[3px]">
        <div className="h-[9px] w-[197px] overflow-hidden border-t border-r border-l border-t-[#a0a0a0] border-r-white border-l-[#a0a0a0] pl-px">Now: 80,200 ps&nbsp; Delta: 0</div>
        <div className="h-[9px] flex-1 overflow-hidden border-t border-r border-l border-t-[#a0a0a0] border-r-white border-l-[#a0a0a0] pl-px">sim:/tb_fir_top/#INITIAL#41</div>
        <div className="h-[9px] w-[168px] overflow-hidden border-t border-l border-t-[#a0a0a0] border-l-[#a0a0a0] pl-[6px]">4982262 ps to 36707984 ps</div>
        <p className="absolute top-[-4px] right-[14px] z-10 font-['Open_Sans','Noto_Sans_CJK_SC',sans-serif] text-[15px] leading-5 text-[#808080] [text-shadow:1px_1px_0_#fff]">CSDN @机械 zp</p>
      </footer>
      <div className="flex h-[13px] shrink-0 overflow-hidden bg-[#d8e6ea]">
        <svg className="h-[13px] min-w-0 flex-1" aria-hidden="true">
          <rect x="341" width="44" height="13" fill="#edf4f7" />
          <rect x="385" width="1" height="13" fill="#b8c8d0" />
          <circle cx="25" cy="20" r="8" fill="none" stroke="#202020" strokeWidth="2" />
          <circle cx="71" cy="20" r="8" fill="none" stroke="#202020" strokeWidth="2" />
          <path d="M109 10h9l2 1h10v2h-21z" fill="#e8b020" />
          <circle cx="169" cy="19" r="11" fill="#c050f0" />
          <path d="M158 19a11 11 0 0 1 9-11v8z" fill="#30b8e0" />
          <path d="M207 11l12-2v1h9v4h-21z" fill="#d04828" />
          <path d="M258 13q3-5 11-5t7 5z" fill="#1878a8" />
          <path d="M304 8h24v5h-24z" fill="#f08820" />
          <path d="M313 13l4-3 4 3z" fill="#fff" />
          <rect x="354" y="9" width="22" height="4" fill="#0000f0" />
          <path d="M1571 13q6-2 13 0z" fill="#f03818" />
          <path d="M1623 13l4-1 4 1z" fill="#803010" />
          <path d="M1738 13l2-1 2 1 2-1 2 1z" fill="#202060" />
          <rect x="1766" y="12" width="15" height="1" fill="#606870" />
        </svg>
        <time className="w-[64px] pt-[2px] font-['Open_Sans',sans-serif] text-xs">12:25</time>
        <span className="mt-3 mr-[26px] h-px w-[15px] bg-black" />
      </div>
    </div>
  );
}
